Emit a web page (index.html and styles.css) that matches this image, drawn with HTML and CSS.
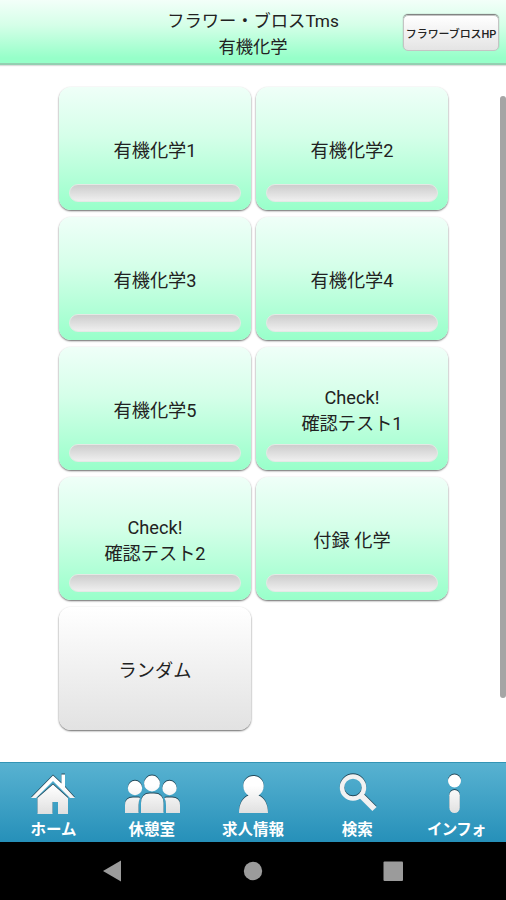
FILE: index.html
```html
<!DOCTYPE html>
<html lang="ja">
<head>
    <meta charset="UTF-8">
    <meta name="viewport" content="width=device-width, initial-scale=1.0">
    <title>フラワー・ブロスTms</title>
    <link rel="stylesheet" href="styles.css">
</head>
<body>

    <header class="header">
        <h1>フラワー・ブロスTms<br>有機化学</h1>
        <button class="hp-button">フラワーブロスHP</button>
    </header>

    <main class="content">
        <div class="cards">
            <div class="card"><p>有機化学1</p><div class="progress"></div></div>
            <div class="card"><p>有機化学2</p><div class="progress"></div></div>
            <div class="card"><p>有機化学3</p><div class="progress"></div></div>
            <div class="card"><p>有機化学4</p><div class="progress"></div></div>
            <div class="card"><p>有機化学5</p><div class="progress"></div></div>
            <div class="card"><p>Check!<br>確認テスト1</p><div class="progress"></div></div>
            <div class="card"><p>Check!<br>確認テスト2</p><div class="progress"></div></div>
            <div class="card"><p>付録 化学</p><div class="progress"></div></div>
            <div class="card random"><p>ランダム</p></div>
        </div>
        <div class="scrollbar"></div>
    </main>

    <nav class="tabs">
        <svg width="0" height="0" class="defs">
            <linearGradient id="iconFill" gradientUnits="userSpaceOnUse" x1="0" y1="0" x2="0" y2="42">
                <stop offset="0.3" stop-color="#ffffff"/>
                <stop offset="1" stop-color="#dedede"/>
            </linearGradient>
        </svg>
        <a class="tab shifted">
            <svg width="60" height="42" viewBox="0 0 60 42">
                <path d="M13.5 41V25L29 11.500L44 25V41H34V29H28.500V41Z"/>
                <path d="M7 25L29 2.500L37.500 10.500V1.500H41V14L51 25H46L29 8L12 25Z"/>
            </svg>
            <span>ホーム</span>
        </a>
        <a class="tab">
            <svg width="60" height="42" viewBox="0 0 60 42">
                <circle cx="13" cy="15" r="7.200"/>
                <circle cx="47.500" cy="15" r="7.200"/>
                <circle cx="30" cy="10.500" r="7.900"/>
                <path d="M3 40V32Q3 24.500 11 24.500H16.500Q17.500 24.500 18 25Q16.500 28 16.500 32V40Z"/>
                <path d="M58 40V32Q58 24.500 50 24.500H44.500Q43 24.500 42.500 25Q44 28 44 32V40Z"/>
                <path d="M19 40V30Q19 20.500 28 20.500H32Q41.500 20.500 41.500 30V40Z"/>
            </svg>
            <span>休憩室</span>
        </a>
        <a class="tab">
            <svg width="60" height="42" viewBox="0 0 60 42">
                <path d="M30.500 3C36.500 3 40.700 7.500 40.700 13C40.700 17.500 38.500 20.500 35.500 22.500C41.500 25 45 31 45 40H16C16 31 19.500 25 25.500 22.500C22.500 20.500 20.300 17.500 20.300 13C20.300 7.500 24.500 3 30.500 3Z"/>
            </svg>
            <span>求人情報</span>
        </a>
        <a class="tab shifted">
            <svg width="60" height="42" viewBox="0 0 60 42">
                <path d="M34.500 23L47.500 36" class="line handle"/>
                <circle cx="26" cy="14.500" r="11" class="line"/>
            </svg>
            <span>検索</span>
        </a>
        <a class="tab info">
            <svg width="60" height="42" viewBox="0 0 60 42">
                <circle cx="28.500" cy="8" r="6.500"/>
                <rect x="23.300" y="17" width="10.500" height="23" rx="5.200"/>
            </svg>
            <span>インフォ</span>
        </a>
    </nav>

    <div class="android-nav">
        <svg width="20" height="22" viewBox="0 0 20 22"><path d="M19 0.500V21.500L1 11Z"/></svg>
        <svg width="20" height="22" viewBox="0 0 20 22"><circle cx="10" cy="11" r="9.200"/></svg>
        <svg width="20" height="22" viewBox="0 0 20 22"><rect x="0.500" y="1.500" width="19.500" height="19.500" rx="1"/></svg>
    </div>

</body>
</html>
```

FILE: styles.css
```css
* {
    box-sizing: border-box;
}
body {
    margin: 0;
    width: 506px;
    height: 900px;
    display: flex;
    flex-direction: column;
    overflow: hidden;
    background-color: white;
    color: #222;
    font-family: Roboto, "Noto Sans CJK JP", sans-serif;
}
.header {
    display: grid;
    grid-template-columns: 96px 1fr 96px;
    align-items: center;
    height: 65px;
    padding: 0 7px;
    background: linear-gradient(#f3fff9, #d5ffe8 40%, #96ffc9 92%);
    border-bottom: 2px solid #94cfb1;
    box-shadow: 0 1px 1px #ddd;
}
.header h1 {
    grid-column: 2;
    margin: 5px 0 0;
    font-size: 17.3px;
    font-weight: 400;
    line-height: 26px;
    text-align: center;
}
.hp-button {
    height: 36px;
    margin-top: 2px;
    padding: 0;
    border: 1px solid #c4c4c4;
    border-radius: 5px;
    background: linear-gradient(#fff, #e4e4e4);
    color: #222;
    font-family: inherit;
    font-size: 11px;
    font-weight: 500;
    letter-spacing: -0.1px;
    white-space: nowrap;
    box-shadow: 0 -1px 1px #777;
}
.content {
    flex: 1;
    display: flex;
    justify-content: space-between;
    padding: 22px 0 0 59px;
}
.cards {
    display: grid;
    grid-template-columns: 192px 192px;
    grid-auto-rows: 123px;
    align-content: start;
    gap: 7px 5px;
}
.card {
    display: flex;
    flex-direction: column;
    align-items: center;
    padding: 0 10px 8px;
    border-radius: 12px;
    background: linear-gradient(#effff8, #d5ffe9 40%, #98ffca);
    box-shadow: 0 1px 2px rgba(0, 0, 0, 0.6);
}
.card p {
    flex: 1;
    display: flex;
    align-items: center;
    margin: 0;
    padding-top: 31px;
    font-size: 18.2px;
    line-height: 26px;
    text-align: center;
}
.card .progress {
    width: 172px;
    height: 18px;
    border: 1px solid #e4e9e5;
    border-radius: 9px;
    background: linear-gradient(#cdcdcd, #efefef);
}
.card.random {
    padding: 0;
    background: linear-gradient(#fff, #e2e2e2);
}
.card.random p {
    padding-top: 5px;
}
.scrollbar {
    width: 6px;
    height: 602px;
    margin-top: 9px;
    border-radius: 3px;
    background-color: #a5a5a5;
}
.tabs {
    display: grid;
    grid-template-columns: repeat(5, 1fr);
    height: 80px;
    border-top: 1px solid #3294b5;
    background: linear-gradient(#58b2d1, #2690b9);
}
.defs {
    position: absolute;
}
.tab {
    display: flex;
    flex-direction: column;
    align-items: center;
    padding-top: 10px;
    color: white;
    font-size: 15.5px;
    font-weight: bold;
    line-height: 30px;
    white-space: nowrap;
}
.tab.shifted {
    padding-left: 6px;
}
.tab.info {
    padding-left: 2px;
    letter-spacing: -0.7px;
}
.tab svg {
    fill: url(#iconFill);
    filter: drop-shadow(0 -1px 0.5px #23495a);
}
.tab .line {
    fill: none;
    stroke: #f2f2f2;
    stroke-width: 4.5;
}
.tab .handle {
    stroke-width: 6;
}
.android-nav {
    display: flex;
    justify-content: space-between;
    align-items: center;
    height: 58px;
    padding: 0 103px 0 102px;
    background-color: black;
}
.android-nav svg {
    fill: #9b9b9b;
}
```
